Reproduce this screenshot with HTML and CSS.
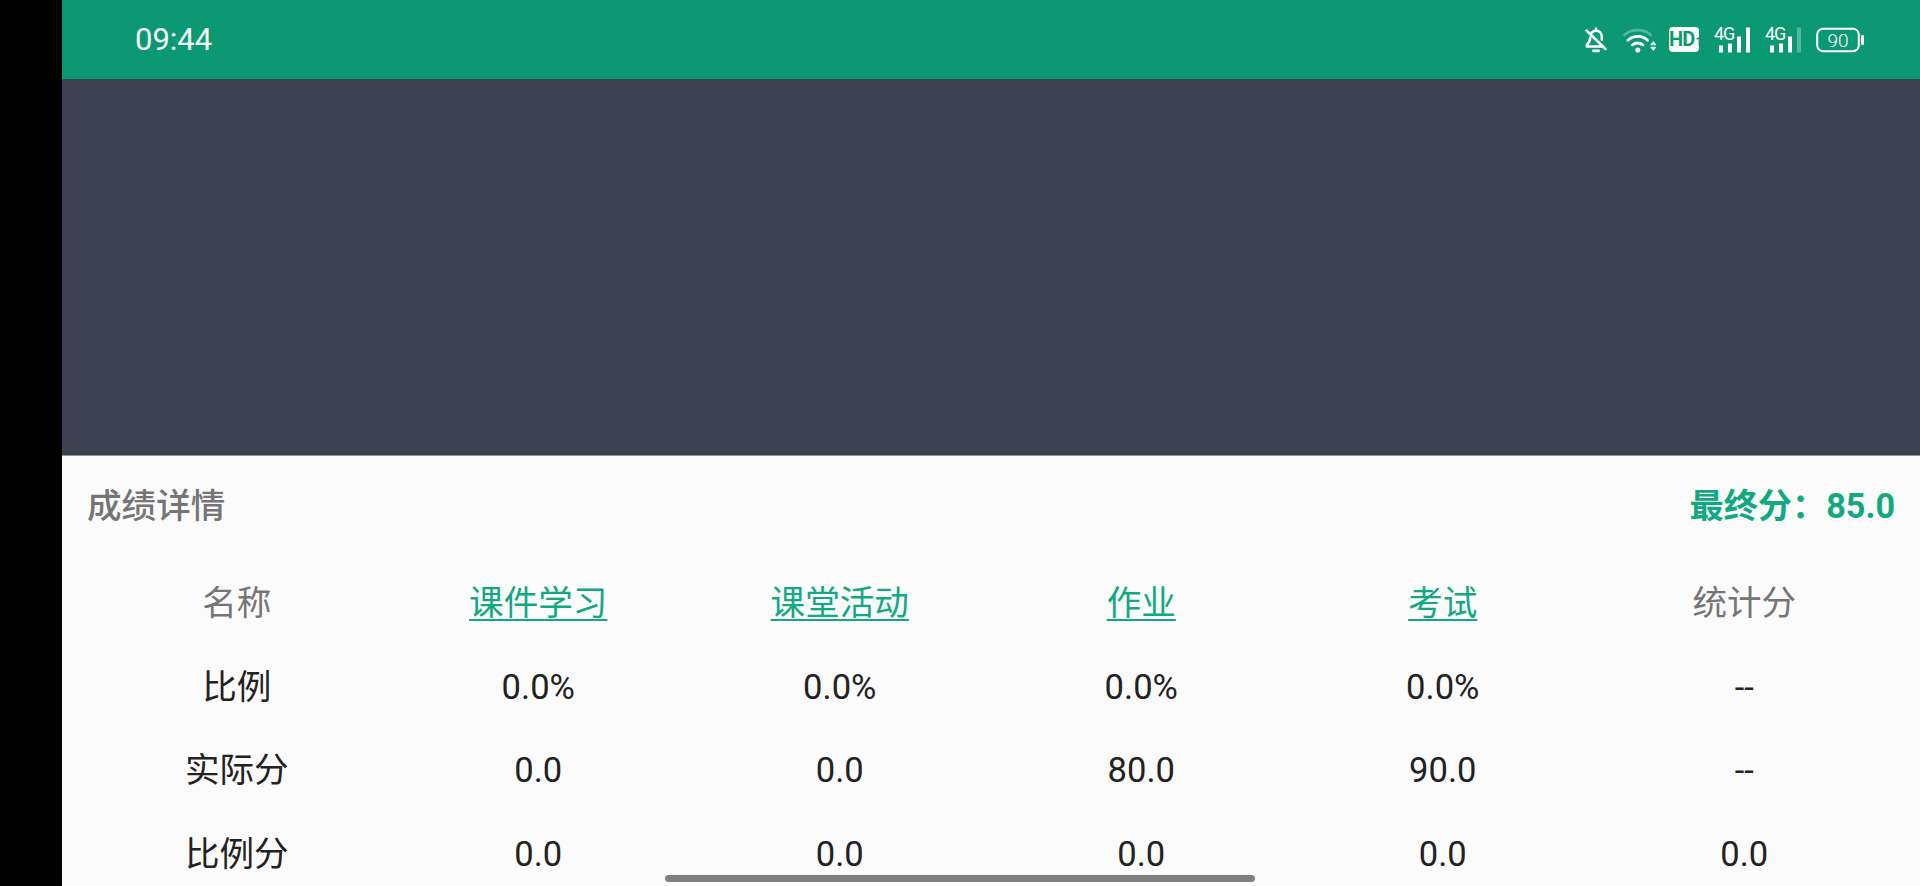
FILE: index.html
```html
<!DOCTYPE html>
<html lang="zh-CN">
<head>
<meta charset="utf-8">
<title>成绩详情</title>
<link rel="stylesheet" href="styles.css">
</head>
<body>
<div class="bezel"></div>
<main class="screen">
  <header class="statusbar">
    <span class="time">09:44</span>
    <div class="status-icons">
      <svg class="ic-bell" width="22" height="26" viewBox="0 0 22 26" fill="none" stroke="#fff" stroke-width="2.5" stroke-linejoin="round" stroke-linecap="round">
        <path d="M11 1.500v2"/>
        <path d="M6.200 6.200C7.300 4.600 9 3.800 11 3.800c3.600 0 5.800 2.600 5.800 6.200 0 .9 0 1.800.1 2.600"/>
        <path d="M5.200 10.500c0 3-1.200 5.300-3.400 7.500v1.500h15.700"/>
        <path d="M1.500 3.500 20.500 22"/>
        <path d="M8.500 23.800h5" stroke-width="2.800"/>
      </svg>
      <svg class="ic-wifi" width="33" height="26" viewBox="0 0 33 26" fill="none" stroke-linecap="round">
        <path d="M1.500 8C8 1.500 21 1.500 28 8" stroke="#fff" stroke-opacity=".3" stroke-width="2.600"/>
        <path d="M5 13.200c5.500-5 14-5 19.500 0" stroke="#fff" stroke-width="2.800"/>
        <path d="M9.500 18c3-2.700 7.500-2.700 10.500 0" stroke="#fff" stroke-width="2.800"/>
        <circle cx="14.800" cy="23" r="2.500" fill="#fff"/>
        <path d="M28 17.500l2.300-3 2.300 3zM28 20.500l2.300 3 2.300-3z" fill="#fff" stroke="#fff" stroke-width=".8" stroke-linejoin="round"/>
      </svg>
      <span class="hd">HD<small>1</small></span>
      <svg class="ic-signal" width="37" height="34" viewBox="0 -4 37 34">
        <text class="sig-text" x="0" y="13">4G</text>
        <rect x="5" y="18.500" width="4" height="7" fill="#fff"/>
        <rect x="14" y="16.500" width="4" height="9" fill="#fff"/>
        <rect x="23" y="9.500" width="4" height="16" fill="#fff"/>
        <rect x="32" y="0.500" width="4" height="25" fill="#fff"/>
      </svg>
      <svg class="ic-signal" width="37" height="34" viewBox="0 -4 37 34">
        <text class="sig-text" x="0" y="13">4G</text>
        <rect x="5" y="18.500" width="4" height="7" fill="#fff"/>
        <rect x="14" y="16.500" width="4" height="9" fill="#fff"/>
        <rect x="23" y="9.500" width="4" height="16" fill="#fff"/>
        <rect x="32" y="0.500" width="4" height="25" fill="#fff" fill-opacity=".3"/>
      </svg>
      <svg class="ic-battery" width="48" height="26" viewBox="0 0 48 26">
        <rect x="1.200" y="1.700" width="41.600" height="22.600" rx="6" fill="none" stroke="#fff" stroke-width="2"/>
        <rect x="45" y="8" width="3" height="10" rx="1.200" fill="#fff"/>
        <text class="bat-text" x="22" y="19.500">90</text>
      </svg>
    </div>
  </header>
  <div class="video"></div>
  <section class="panel">
    <div class="panel-head">
      <h1 class="panel-title">成绩详情</h1>
      <p class="final">最终分：85.0</p>
    </div>
    <div class="score-table">
      <span class="label">名称</span>
      <a class="link">课件学习</a>
      <a class="link">课堂活动</a>
      <a class="link">作业</a>
      <a class="link">考试</a>
      <span class="label">统计分</span>

      <span>比例</span><span>0.0%</span><span>0.0%</span><span>0.0%</span><span>0.0%</span><span>--</span>
      <span>实际分</span><span>0.0</span><span>0.0</span><span>80.0</span><span>90.0</span><span>--</span>
      <span>比例分</span><span>0.0</span><span>0.0</span><span>0.0</span><span>0.0</span><span>0.0</span>
    </div>
  </section>
  <div class="home-bar"></div>
</main>
</body>
</html>
```

FILE: styles.css
```css
* { box-sizing: border-box; }
html, body { margin: 0; height: 100%; overflow: hidden; }
body {
  display: flex;
  background: #000;
  font-family: Roboto, "Noto Sans CJK SC", sans-serif;
}
.bezel { width: 62px; flex: none; background: #000; }
.screen {
  flex: 1;
  display: flex;
  flex-direction: column;
  height: 886px;
  overflow: hidden;
  position: relative;
  background: #fbfbfb;
}
.statusbar {
  height: 79px;
  flex: none;
  display: flex;
  align-items: center;
  justify-content: space-between;
  padding: 0 56px 0 73px;
  background: #0c9873;
  color: #f2fbf8;
}
.time { font-size: 31px; line-height: 79px; }
.status-icons { display: flex; align-items: center; }
.status-icons svg, .hd { flex: none; display: block; }
.ic-bell { margin-right: 16px; }
.ic-wifi { margin-right: 13px; }
.hd {
  width: 30px;
  height: 25px;
  margin-right: 15px;
  background: #fff;
  border-radius: 4px;
  color: #0c9873;
  font: 700 20px/25px "Liberation Sans Narrow", Roboto, sans-serif;
  letter-spacing: -.8px;
  text-align: center;
  white-space: nowrap;
}
.hd small { font-size: 12px; letter-spacing: 0; margin-left: 1px; }
.ic-signal { margin-right: 14px; }
.sig-text { font: 400 18px Roboto, sans-serif; fill: #fff; letter-spacing: -1.2px; }
.bat-text { font: 300 19px Roboto, sans-serif; fill: #fff; text-anchor: middle; }
.video { height: 377px; flex: none; background: #3c4252; border-bottom: 1px solid #8f939c; }
.panel { flex: 1; padding: 0 25px 0 24px; background: #fbfbfb; }
.panel-head {
  height: 106px;
  display: flex;
  align-items: center;
  justify-content: space-between;
  padding: 0 0 4px 1px;
}
.panel-title { margin: 0; font-size: 34.6px; font-weight: 500; color: #757575; line-height: 1.2; }
.final { margin: 0; font-size: 34.2px; font-weight: 700; color: #12a882; line-height: 1.2; }
.score-table {
  display: grid;
  grid-template-columns: repeat(6, 1fr);
  grid-auto-rows: 83.6px;
  align-items: center;
  justify-items: center;
  font-size: 34.6px;
  line-height: 1.2;
  color: #222;
}
.label { color: #757575; }
.link { color: #12a882; text-decoration: underline; text-underline-offset: 4px; text-decoration-thickness: 2px; }
.home-bar {
  position: absolute;
  left: 603px;
  bottom: 4px;
  width: 590px;
  height: 7px;
  border-radius: 4px;
  background: #808080;
}
```
